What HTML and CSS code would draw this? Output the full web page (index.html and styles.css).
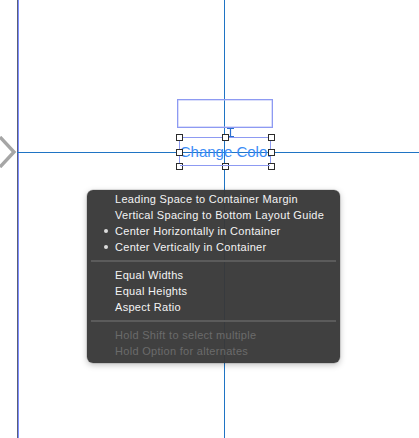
FILE: index.html
```html
<!DOCTYPE html>
<html>
<head>
<meta charset="utf-8">
<link rel="stylesheet" href="styles.css">
</head>
<body>
<div class="canvas">
  <div class="vline-left"></div>
  <div class="vline-center"></div>
  <div class="hline"></div>
  <svg class="chevron" width="18" height="32" viewBox="0 0 18 32"><path d="M1 1 L15 16 L1 31" fill="none" stroke="#a6a6a6" stroke-width="3.4"/></svg>
  <div class="box-top"></div>
  <svg class="ibeam" width="7" height="9" viewBox="0 0 7 9"><path d="M0 0.5 H7 M3.5 0.5 V8.5 M0 8.5 H7" stroke="#2a6fd0" stroke-width="1.2" fill="none"/></svg>
  <div class="sel">
    <span class="sel-text">Change Color</span>
    <span class="h h-tl"></span><span class="h h-tc"></span><span class="h h-tr"></span>
    <span class="h h-ml"></span><span class="h h-mr"></span>
    <span class="h h-bl"></span><span class="h h-bc"></span><span class="h h-br"></span>
  </div>
  <div class="menu">
    <div class="item">Leading Space to Container Margin</div>
    <div class="item">Vertical Spacing to Bottom Layout Guide</div>
    <div class="item checked">Center Horizontally in Container</div>
    <div class="item checked">Center Vertically in Container</div>
    <div class="sep"></div>
    <div class="item">Equal Widths</div>
    <div class="item">Equal Heights</div>
    <div class="item">Aspect Ratio</div>
    <div class="sep"></div>
    <div class="item disabled">Hold Shift to select multiple</div>
    <div class="item disabled">Hold Option for alternates</div>
  </div>
</div>
</body>
</html>
```
FILE: styles.css
```css
html, body {
  margin: 0;
  padding: 0;
  background: #ffffff;
}
.canvas {
  position: relative;
  width: 419px;
  height: 438px;
  overflow: hidden;
  font-family: "Liberation Sans", Arial, sans-serif;
}
.vline-left {
  position: absolute;
  left: 17px;
  top: 0;
  width: 1px;
  height: 438px;
  background: #5a5f78;
  border-right: 1px solid #7d8dff;
}
.vline-center {
  position: absolute;
  left: 224px;
  top: 0;
  width: 1px;
  height: 438px;
  background: #1f74c4;
}
.hline {
  position: absolute;
  left: 17px;
  top: 152px;
  width: 402px;
  height: 1px;
  background: #1f74c4;
}
.chevron {
  position: absolute;
  left: -1px;
  top: 136px;
}
.box-top {
  position: absolute;
  left: 177px;
  top: 99px;
  width: 94px;
  height: 27px;
  border: 1px solid #8d9af2;
  box-shadow: inset 0 0 0 0.5px #b5bdf7;
}
.ibeam {
  position: absolute;
  left: 227px;
  top: 128px;
}
.sel {
  position: absolute;
  left: 179px;
  top: 137px;
  width: 92px;
  height: 29px;
  box-sizing: border-box;
  border: 1px solid #8d9af2;
  border-bottom: none;
  border-top: none;
}
.sel::before, .sel::after {
  content: "";
  position: absolute;
  left: 0;
  right: 0;
  height: 1px;
  background: #8d9af2;
}
.sel::before { top: 0; }
.sel::after { bottom: 0; }
.sel-text {
  position: absolute;
  left: -2px;
  top: 6px;
  width: 96px;
  text-align: center;
  font-size: 15px;
  line-height: 17px;
  color: #3a8cf6;
  white-space: nowrap;
}
.h {
  position: absolute;
  width: 5px;
  height: 5px;
  background: #ffffff;
  border: 1px solid #2c2c2c;
}
.h-tl { left: -4px; top: -3px; }
.h-tc { left: 42px; top: -3px; }
.h-tr { left: 88px; top: -3px; }
.h-ml { left: -4px; top: 12px; }
.h-mr { left: 88px; top: 12px; }
.h-bl { left: -4px; top: 26px; }
.h-bc { left: 42px; top: 26px; }
.h-br { left: 88px; top: 26px; }
.menu {
  position: absolute;
  left: 87px;
  top: 190px;
  width: 253px;
  box-sizing: border-box;
  padding: 1px 0 4px;
  background: rgba(56, 56, 56, 0.96);
  border-radius: 6px;
  box-shadow: 0 2px 6px rgba(0, 0, 0, 0.25), 0 0 0 0.5px rgba(0, 0, 0, 0.2);
}
.item {
  position: relative;
  height: 16px;
  line-height: 16px;
  padding-left: 28px;
  font-size: 11px;
  letter-spacing: 0.3px;
  color: #f4f4f4;
  white-space: nowrap;
}
.item.checked::before {
  content: "";
  position: absolute;
  left: 17px;
  top: 6px;
  width: 4px;
  height: 4px;
  border-radius: 50%;
  background: #dcdcdc;
}
.item.disabled {
  color: #6b6b6b;
}
.sep {
  height: 2px;
  margin: 5px 4px;
  background: #5b5b5b;
}
```
